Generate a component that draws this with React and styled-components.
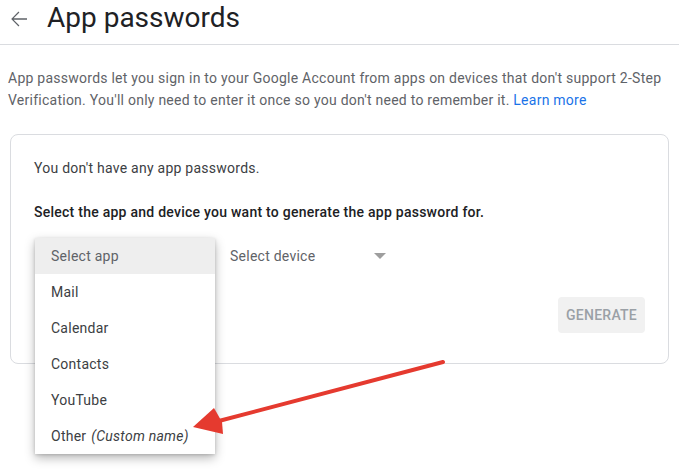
import React from 'react';
import styled, {createGlobalStyle} from 'styled-components';

const GlobalStyle = createGlobalStyle`
  html, body {
    margin: 0;
    padding: 0;
    background: #fff;
    font-family: Roboto, "Liberation Sans", Arial, sans-serif;
  }
`;

const Page = styled.div`
  position: relative;
  width: 679px;
  height: 473px;
  overflow: hidden;
  letter-spacing: 0.25px;
`;

const Header = styled.div`
  display: flex;
  align-items: center;
  height: 45px;
  box-sizing: border-box;
  border-bottom: 1px solid #dadce0;
  padding-left: 7px;
`;

const BackIcon = styled.svg`
  width: 24px;
  height: 24px;
  fill: #5f6368;
  margin-right: 16px;
  margin-top: -7px;
`;

const Title = styled.h1`
  margin: -9px 0 0 0;
  font-size: 28px;
  font-weight: 400;
  line-height: 36px;
  letter-spacing: 0;
  color: #202124;
`;

const Intro = styled.p`
  margin: 22px 0 0 0;
  padding: 0 8px;
  font-size: 14px;
  line-height: 22px;
  color: #5f6368;
`;

const Link = styled.a`
  color: #1a73e8;
  text-decoration: none;
`;

const Card = styled.div`
  margin: 23px 10px 0 10px;
  border: 1px solid #dadce0;
  border-radius: 8px;
  padding: 23px 23px 30px 23px;
`;

const Line = styled.div`
  font-size: 14px;
  line-height: 20px;
  color: ${({strong}) => (strong ? '#202124' : '#3c4043')};
  font-weight: ${({strong}) => (strong ? 500 : 400)};
  margin-top: ${({gap}) => gap || 0}px;
`;

const SelectRow = styled.div`
  display: flex;
  margin-top: 16px;
`;

const SelectBox = styled.div`
  position: relative;
  width: 180px;
  height: 36px;
  display: flex;
  align-items: center;
  justify-content: space-between;
  padding: 0 8px 0 16px;
  box-sizing: border-box;
  font-size: 14px;
  color: #5f6368;
`;

const Caret = styled.span`
  width: 0;
  height: 0;
  border-left: 6px solid transparent;
  border-right: 6px solid transparent;
  border-top: 6px solid #9e9e9e;
`;

const Menu = styled.div`
  position: absolute;
  top: 0;
  left: 1px;
  width: 180px;
  background: #fff;
  box-shadow: 0 4px 10px rgba(0, 0, 0, 0.28), 0 1px 3px rgba(0, 0, 0, 0.15);
  z-index: 2;
`;

const MenuItem = styled.div`
  height: 36px;
  display: flex;
  align-items: center;
  padding-left: 16px;
  font-size: 14px;
  color: ${({selected}) => (selected ? '#5f6368' : '#3c4043')};
  background: ${({selected}) => (selected ? '#eeeeee' : '#fff')};
  em {
    margin-left: 5px;
  }
`;

const Actions = styled.div`
  display: flex;
  justify-content: flex-end;
  margin-top: 23px;
`;

const GenerateButton = styled.button`
  height: 36px;
  padding: 0 8px;
  border: none;
  border-radius: 4px;
  background: #f1f1f1;
  color: #9aa0a6;
  font-family: inherit;
  font-size: 14px;
  font-weight: 500;
  letter-spacing: 0.25px;
`;

const Annotation = styled.svg`
  position: absolute;
  left: 0;
  top: 0;
  pointer-events: none;
  z-index: 5;
`;

const apps = ['Mail', 'Calendar', 'Contacts', 'YouTube'];

export default function App() {
  return (
    <Page>
      <GlobalStyle />
      <Header>
        <BackIcon viewBox="0 0 24 24">
          <path d="M20 11.3H6.6l5.8-5.8-.9-.9L4.2 12l7.3 7.4.9-.9-5.8-5.8H20v-1.4z" />
        </BackIcon>
        <Title>App passwords</Title>
      </Header>
      <Intro>
        App passwords let you sign in to your Google Account from apps on devices that don't support 2-Step
        Verification. You'll only need to enter it once so you don't need to remember it.{' '}
        <Link href="#">Learn more</Link>
      </Intro>
      <Card>
        <Line>You don't have any app passwords.</Line>
        <Line strong gap={24}>Select the app and device you want to generate the app password for.</Line>
        <SelectRow>
          <SelectBox>
            Select app
            <Menu>
              <MenuItem selected>Select app</MenuItem>
              {apps.map(name => (
                <MenuItem key={name}>{name}</MenuItem>
              ))}
              <MenuItem>
                Other<em>(Custom name)</em>
              </MenuItem>
            </Menu>
          </SelectBox>
          <SelectBox>
            Select device
            <Caret />
          </SelectBox>
        </SelectRow>
        <Actions>
          <GenerateButton>GENERATE</GenerateButton>
        </Actions>
      </Card>
      <Annotation width="679" height="473" viewBox="0 0 679 473">
        <line x1="443" y1="362" x2="215" y2="422" stroke="#e53a2f" strokeWidth="4" strokeLinecap="round" />
        <polygon points="193,427 214,408 222,422 223,434" fill="#e53a2f" />
      </Annotation>
    </Page>
  );
}
